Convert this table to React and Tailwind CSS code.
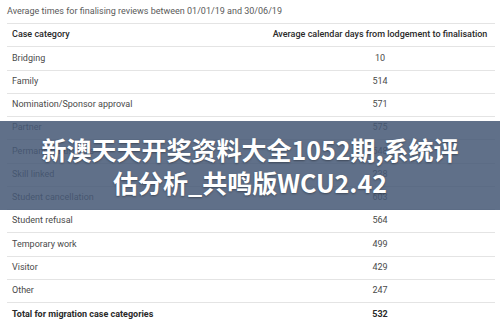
const rows = [
    ["Bridging", "10"],
    ["Family", "514"],
    ["Nomination/Sponsor approval", "571"],
    ["Partner", "575"],
    ["Permanent business", "548"],
    ["Skill linked", "238"],
    ["Student cancellation", "603"],
    ["Student refusal", "564"],
    ["Temporary work", "499"],
    ["Visitor", "429"],
    ["Other", "247"],
];

const App = () => {
    return (
        <div className="relative w-[500px] h-[332px] overflow-hidden bg-white font-['Roboto',sans-serif]">
            {/* Caption */}
            <div className="h-[23px] pl-[7px] pt-[5px] text-[9px] text-[#5a5a5a]">
                Average times for finalising reviews between 01/01/19 and 30/06/19
            </div>

            {/* Table */}
            <div className="ml-[7px] mr-[5px] border-t border-[#e4e4e4] text-[9px] whitespace-nowrap">
                <div className="flex h-[23.25px] items-center border-b border-[#e4e4e4] font-medium text-[#2a2a2a]">
                    <div className="w-[258px] shrink-0 pl-[5px]">Case category</div>
                    <div className="flex-1 min-w-0 text-center">Average calendar days from lodgement to finalisation</div>
                </div>
                {rows.map(([name, days]) => (
                    <div key={name} className="flex h-[23.25px] items-center border-b border-[#e4e4e4] text-[#4a4a4a]">
                        <div className="w-[258px] shrink-0 pl-[5px]">{name}</div>
                        <div className="flex-1 min-w-0 text-center">{days}</div>
                    </div>
                ))}
                <div className="flex h-[23.25px] items-center font-bold text-[#2a2a2a]">
                    <div className="w-[258px] shrink-0 pl-[5px]">Total for migration case categories</div>
                    <div className="flex-1 min-w-0 text-center">532</div>
                </div>
            </div>

            {/* Title overlay */}
            <div className="absolute left-0 right-0 top-[121px] h-[89px] bg-[rgba(70,88,118,0.86)] flex items-center justify-center">
                <p className="text-center text-white font-bold text-[25px] leading-[33px] font-['Noto_Sans_CJK_SC','Noto_Sans',sans-serif] [text-shadow:0_1px_2px_rgba(0,0,0,0.35)]">
                    新澳天天开奖资料大全1052期,系统评
                    <br />
                    估分析_共鸣版WCU2.42
                </p>
            </div>
        </div>
    );
};

export default App;
